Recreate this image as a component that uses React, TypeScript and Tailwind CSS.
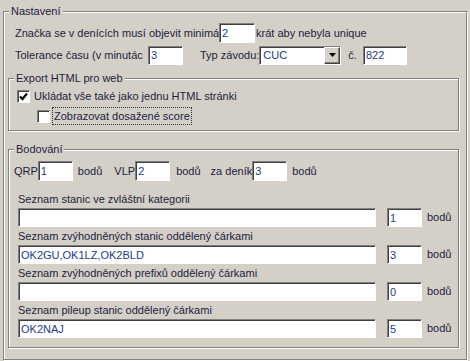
import type { ReactNode } from "react";

const sunken =
  "bg-white border border-t-[#808080] border-l-[#808080] border-b-white border-r-white shadow-[inset_1px_1px_0_#404040]";

function Field({ value = "", className = "" }: { value?: string; className?: string }) {
  return (
    <input
      readOnly
      value={value}
      className={`${sunken} px-[2px] text-[#1b3a8c] leading-[15px] outline-none ${className}`}
    />
  );
}

function Group({ title, className = "", children }: { title: string; className?: string; children: ReactNode }) {
  return (
    <div
      className={`flex flex-col border border-[#808080] shadow-[inset_1px_1px_0_#fff,1px_1px_0_#fff] ${className}`}
    >
      <span className="-mt-[8px] ml-[5px] self-start bg-[#d4d0c8] px-[2px] leading-[14px]">{title}</span>
      {children}
    </div>
  );
}

function Checkbox({ checked }: { checked?: boolean }) {
  return (
    <span className={`${sunken} flex h-[13px] w-[13px] shrink-0 items-center justify-center`}>
      {checked && (
        <svg width="9" height="9" viewBox="0 0 9 9">
          <path d="M1 4.5 L3.5 7 L8 1.5" fill="none" stroke="#000" strokeWidth="2.2" />
        </svg>
      )}
    </span>
  );
}

function ListRow({ label, value, points }: { label: string; value: string; points: string }) {
  return (
    <div className="ml-[9px] flex flex-col">
      <span className="h-[18px] leading-[18px] whitespace-nowrap">{label}</span>
      <div className="flex h-[19px] items-center">
        <Field value={value} className="h-[19px] w-[358px]" />
        <Field value={points} className="ml-[11px] h-[19px] w-[35px]" />
        <span className="ml-[5px]">bodů</span>
      </div>
    </div>
  );
}

export default function App() {
  return (
    <div className="h-[361px] w-[470px] overflow-hidden bg-[#d4d0c8] pt-[11px] font-['Liberation_Sans',Arial,sans-serif] text-[11px] text-[#1c1c40]">
      <Group title="Nastavení" className="ml-[3px] h-[349px] w-[464px]">
        <div className="ml-[11px] mt-[5px] flex h-[20px] items-center">
          <span className="w-[204px] whitespace-nowrap">Značka se v denících musí objevit minimá</span>
          <Field value="2" className="h-[20px] w-[36px]" />
          <span className="ml-[1px]">krát aby nebyla unique</span>
        </div>

        <div className="ml-[11px] mt-[2px] flex h-[20px] items-center">
          <span className="w-[133px] whitespace-nowrap">Tolerance času (v minutác</span>
          <Field value="3" className="h-[19px] w-[35px]" />
          <span className="ml-[17px]">Typ závodu:</span>
          <div className={`${sunken} flex h-[19px] w-[82px] items-stretch`}>
            <span className="flex-1 pl-[3px] leading-[16px] text-[#1b3a8c]">CUC</span>
            <span className="flex w-[16px] items-center justify-center border border-t-white border-l-white border-b-[#404040] border-r-[#404040] bg-[#d4d0c8] shadow-[inset_-1px_-1px_0_#808080]">
              <svg width="7" height="4" viewBox="0 0 7 4">
                <path d="M0 0 H7 L3.5 4 Z" fill="#000" />
              </svg>
            </span>
          </div>
          <span className="ml-[7px]">č.</span>
          <Field value="822" className="ml-[6px] h-[19px] w-[44px]" />
        </div>

        <Group title="Export HTML pro web" className="ml-[4px] mt-[13px] h-[53px] w-[451px]">
          <div className="ml-[8px] mt-[3px] flex h-[16px] items-center">
            <Checkbox checked />
            <span className="ml-[4px]">Ukládat vše také jako jednu HTML stránki</span>
          </div>
          <div className="ml-[28px] mt-[3px] flex h-[18px] items-center">
            <Checkbox />
            <span className="ml-[2px] h-[18px] border border-dotted border-[#303030] px-[1px] leading-[16px]">
              Zobrazovat dosažené score
            </span>
          </div>
        </Group>

        <Group title="Bodování" className="ml-[4px] mt-[18px] h-[199px] w-[451px]">
          <div className="ml-[5px] mt-[5px] flex h-[20px] items-center">
            <span>QRP</span>
            <Field value="1" className="h-[20px] w-[35px]" />
            <span className="ml-[5px]">bodů</span>
            <span className="ml-[12px]">VLP</span>
            <Field value="2" className="h-[20px] w-[35px]" />
            <span className="ml-[6px]">bodů</span>
            <span className="ml-[10px]">za deník</span>
            <Field value="3" className="h-[20px] w-[35px]" />
            <span className="ml-[5px]">bodů</span>
          </div>
          <div className="mt-[9px] flex flex-col">
            <ListRow label="Seznam stanic ve zvláštní kategorii" value="" points="1" />
            <ListRow label="Seznam zvýhodněných stanic oddělený čárkami" value="OK2GU,OK1LZ,OK2BLD" points="3" />
            <ListRow label="Seznam zvýhodněných prefixů oddělený čárkami" value="" points="0" />
            <ListRow label="Seznam pileup stanic oddělený čárkami" value="OK2NAJ" points="5" />
          </div>
        </Group>
      </Group>
    </div>
  );
}
